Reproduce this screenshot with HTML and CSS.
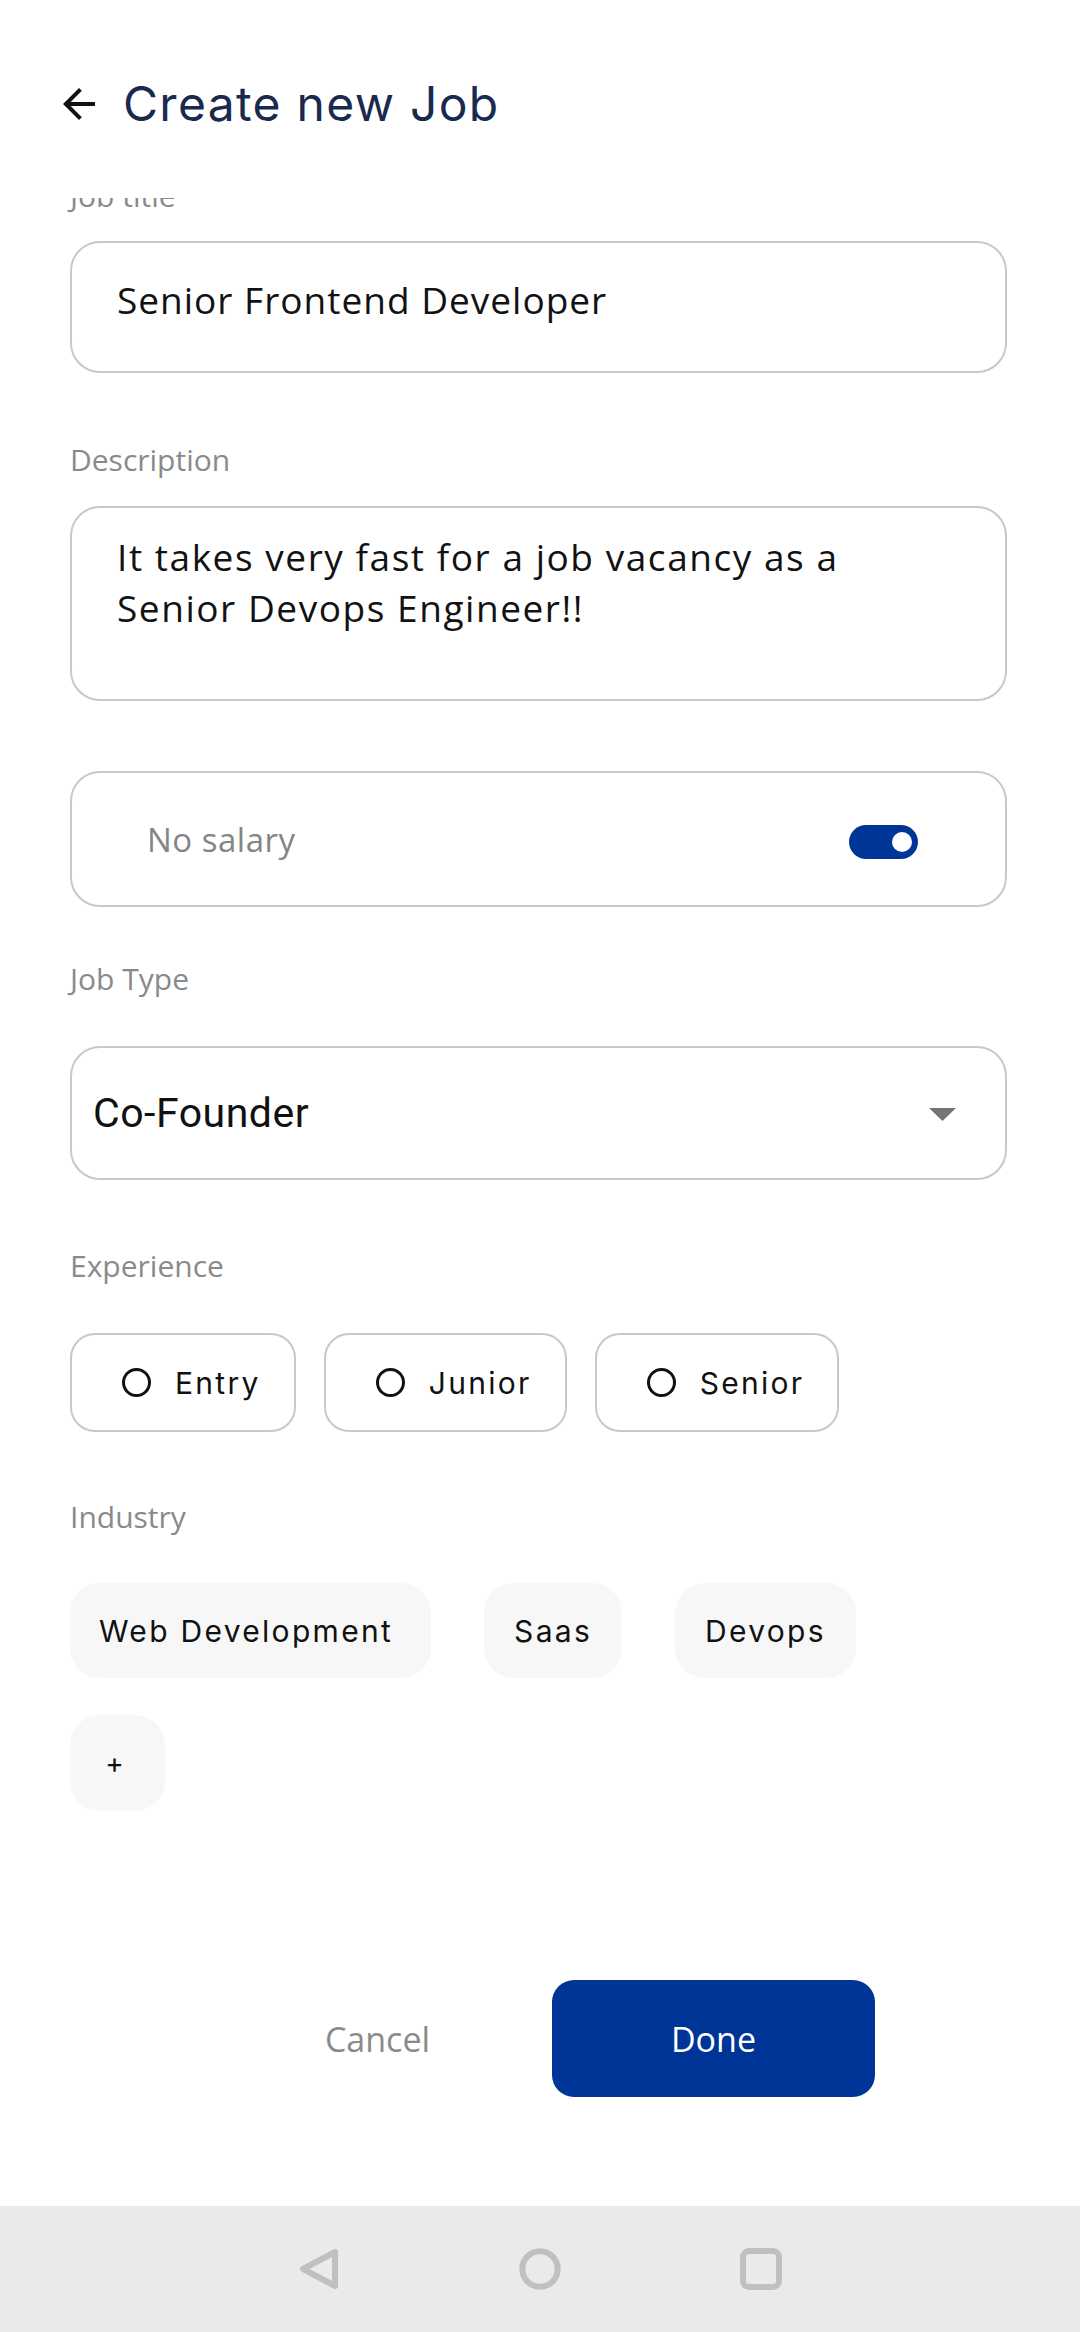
FILE: index.html
```html
<!DOCTYPE html>
<html lang="en">
<head>
<meta charset="utf-8">
<title>Create new Job</title>
<link rel="stylesheet" href="styles.css">
</head>
<body>
<div class="screen">
  <header class="topbar">
    <svg class="back" viewBox="0 0 24 24" aria-hidden="true"><path d="M20 11H7.83l5.59-5.59L12 4l-8 8 8 8 1.41-1.41L7.83 13H20v-2z"/></svg>
    <h1 class="title">Create new Job</h1>
  </header>

  <main class="scroll">
    <div class="form">
      <div class="label label-first">Job title</div>
      <div class="input input-single">Senior Frontend Developer</div>

      <div class="label label-desc">Description</div>
      <div class="input input-multi">It takes very fast for a job vacancy as a Senior Devops Engineer!!</div>

      <div class="salary">
        <span class="salary-text">No salary</span>
        <span class="switch"><span class="switch-thumb"></span></span>
      </div>

      <div class="label label-type">Job Type</div>
      <div class="select">
        <span class="select-value">Co-Founder</span>
        <svg class="caret" viewBox="0 0 27 13" aria-hidden="true"><polygon points="0,0 27,0 13.5,13"/></svg>
      </div>

      <div class="label label-exp">Experience</div>
      <div class="exp-row">
        <div class="exp-chip"><span class="radio"></span><span class="exp-text">Entry</span></div>
        <div class="exp-chip"><span class="radio"></span><span class="exp-text">Junior</span></div>
        <div class="exp-chip"><span class="radio"></span><span class="exp-text">Senior</span></div>
      </div>

      <div class="label label-ind">Industry</div>
      <div class="tags">
        <div class="tag tag-wide">Web Development</div>
        <div class="tag">Saas</div>
        <div class="tag">Devops</div>
      </div>
      <div class="tag tag-add">+</div>
    </div>
  </main>

  <footer class="actions">
    <button class="btn btn-cancel">Cancel</button>
    <button class="btn btn-done">Done</button>
  </footer>

  <nav class="navbar">
    <svg class="nav-icon" viewBox="0 0 42 42" aria-hidden="true"><polygon points="37,4 37,38 5,21"/></svg>
    <svg class="nav-icon" viewBox="0 0 42 42" aria-hidden="true"><circle cx="21" cy="21" r="17.7"/></svg>
    <svg class="nav-icon" viewBox="0 0 42 42" aria-hidden="true"><rect x="3" y="3" width="36" height="36" rx="6"/></svg>
  </nav>
</div>
</body>
</html>
```
FILE: styles.css
```css
* { box-sizing: border-box; }
html, body { margin: 0; padding: 0; background: #ffffff; }
body { font-family: "Open Sans", "Noto Sans", sans-serif; color: #121212; }

.screen {
  width: 1080px;
  height: 2332px;
  display: flex;
  flex-direction: column;
  overflow: hidden;
}

/* header */
.topbar {
  height: 198px;
  flex: none;
  padding: 74px 0 0 55px;
  display: flex;
  align-items: flex-start;
  gap: 20px;
}
.back { width: 48px; height: 48px; fill: #111111; margin-top: 6px; flex: none; }
.title {
  margin: 0;
  font-family: "Inter", sans-serif;
  font-weight: 400;
  font-size: 48px;
  line-height: 60px;
  letter-spacing: 1.3px;
  color: #1a2a4f;
}

/* scroll area */
.scroll { flex: 1; overflow: hidden; }
.form { margin-top: -22px; padding: 0 73px 0 70px; }

.label {
  font-size: 30px;
  line-height: 40px;
  color: #8a8a8a;
}
.label-first { margin-bottom: 25px; }
.label-desc { margin-top: 67px; margin-bottom: 26px; }
.label-type { margin-top: 52px; margin-bottom: 47px; }
.label-exp { margin-top: 66px; margin-bottom: 47px; }
.label-ind { margin-top: 65px; margin-bottom: 46px; }

.input {
  border: 2px solid #c8c8c8;
  border-radius: 30px;
  font-size: 37px;
  line-height: 51px;
  color: #121212;
  padding-left: 45px;
}
.input-single { height: 132px; padding-top: 31px; letter-spacing: 1px; }
.input-multi { height: 195px; padding-top: 23px; padding-right: 80px; letter-spacing: 1.55px; }

.salary {
  margin-top: 70px;
  height: 136px;
  border: 2px solid #c8c8c8;
  border-radius: 30px;
  padding: 0 87px 0 75px;
  display: flex;
  align-items: center;
  justify-content: space-between;
}
.salary-text { font-size: 33px; letter-spacing: 0.5px; color: #858585; }
.switch {
  width: 69px;
  height: 34px;
  border-radius: 17px;
  background: #003598;
  display: flex;
  align-items: center;
  justify-content: flex-end;
  padding-right: 6px;
  margin-top: 6px;
}
.switch-thumb { width: 20px; height: 20px; border-radius: 50%; background: #ffffff; }

.select {
  height: 134px;
  border: 2px solid #c8c8c8;
  border-radius: 30px;
  padding: 0 49px 0 21px;
  display: flex;
  align-items: center;
  justify-content: space-between;
}
.select-value {
  font-family: "Roboto", sans-serif;
  font-size: 41px;
  letter-spacing: 0.5px;
  color: #111111;
}
.caret { width: 27px; height: 13px; fill: #757575; margin-top: 2px; }

.exp-row { display: flex; gap: 28px; }
.exp-chip {
  height: 99px;
  border: 2px solid #c8c8c8;
  border-radius: 25px;
  padding: 0 33px 0 50px;
  display: flex;
  align-items: center;
  gap: 24px;
}
.radio {
  width: 29px;
  height: 29px;
  border: 3px solid #111111;
  border-radius: 50%;
  flex: none;
}
.exp-text {
  font-family: "Inter", sans-serif;
  font-size: 30px;
  letter-spacing: 2.3px;
  color: #111111;
}

.tags { display: flex; gap: 53px; }
.tag {
  height: 95px;
  padding: 0 30px;
  border-radius: 30px;
  background: #f7f7f7;
  display: flex;
  align-items: center;
  font-family: "Inter", sans-serif;
  font-size: 30px;
  letter-spacing: 2.3px;
  color: #111111;
}
.tag-wide { padding: 0 38px 0 29px; }
.tag-add {
  margin-top: 37px;
  width: 95px;
  height: 96px;
  padding: 0 6px 0 0;
  justify-content: center;
  letter-spacing: 0;
  font-size: 28px;
}

/* footer buttons */
.actions {
  height: 300px;
  flex: none;
  padding: 74px 0 0 216px;
  display: flex;
  align-items: flex-start;
  gap: 13px;
}
.btn {
  width: 323px;
  height: 117px;
  border: none;
  border-radius: 22px;
  font-family: "Open Sans", sans-serif;
  font-size: 34px;
  padding: 0;
}
.btn-cancel { background: transparent; color: #8a8a8a; }
.btn-done { background: #003598; color: #ffffff; }

/* system nav */
.navbar {
  height: 126px;
  flex: none;
  background: #eaeaea;
  display: flex;
  align-items: center;
  justify-content: center;
  gap: 179px;
}
.nav-icon {
  width: 42px;
  height: 42px;
  fill: none;
  stroke: #c0c0c0;
  stroke-width: 6;
  stroke-linejoin: round;
}
```
